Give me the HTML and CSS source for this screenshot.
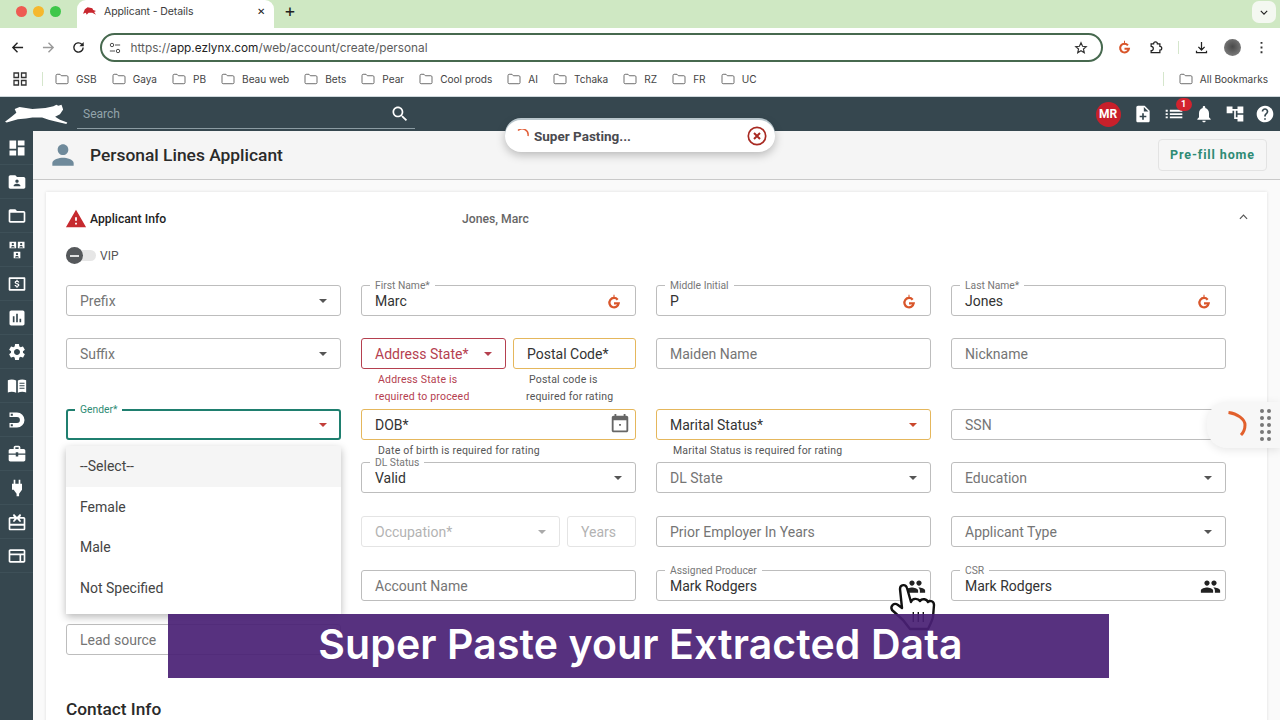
FILE: index.html
```html
<!DOCTYPE html>
<html lang="en">
<head>
  <meta charset="UTF-8" />
  <meta name="viewport" content="width=device-width, initial-scale=1.0"/>
  <title>Applicant - Details</title>
  <link rel="stylesheet" href="styles.css">
</head>
<body>

<svg class="sprite" xmlns="http://www.w3.org/2000/svg">
  <symbol id="i-dashboard" viewBox="0 0 24 24"><path d="M3 13h8V3H3v10zm0 8h8v-6H3v6zm10 0h8V11h-8v10zm0-18v6h8V3h-8z"/></symbol>
  <symbol id="i-folder-shared" viewBox="0 0 24 24"><path d="M20 6h-8l-2-2H4c-1.1 0-1.99.9-1.99 2L2 18c0 1.1.9 2 2 2h16c1.1 0 2-.9 2-2V8c0-1.1-.9-2-2-2zm-8 3c1.1 0 2 .9 2 2s-.9 2-2 2-2-.9-2-2 .9-2 2-2zm4 8H8v-1c0-1.33 2.67-2 4-2s4 .67 4 2v1z"/></symbol>
  <symbol id="i-folder" viewBox="0 0 24 24"><path d="M20 6h-8l-2-2H4c-1.1 0-1.99.9-1.99 2L2 18c0 1.1.9 2 2 2h16c1.1 0 2-.9 2-2V8c0-1.1-.9-2-2-2zm0 12H4V8h16v10z"/></symbol>
  <symbol id="i-people" viewBox="0 0 24 24"><path d="M3 2h8v8H3zM13 2h8v8h-8zM8 14h8v8H8z"/><path fill="#36474f" d="M7 3.5a1.4 1.4 0 1 1 0 2.8 1.4 1.4 0 0 1 0-2.8zM4.6 9c0-1.2 1.6-1.8 2.4-1.8s2.4.6 2.4 1.8zM17 3.5a1.4 1.4 0 1 1 0 2.8 1.4 1.4 0 0 1 0-2.8zM14.6 9c0-1.2 1.6-1.8 2.4-1.8s2.4.6 2.4 1.8zM12 15.5a1.4 1.4 0 1 1 0 2.8 1.4 1.4 0 0 1 0-2.8zM9.6 21c0-1.2 1.6-1.8 2.4-1.8s2.4.6 2.4 1.8z"/></symbol>
  <symbol id="i-dollar" viewBox="0 0 24 24"><path fill-rule="evenodd" d="M3 4h18c.6 0 1 .4 1 1v14c0 .6-.4 1-1 1H3c-.6 0-1-.4-1-1V5c0-.6.4-1 1-1zm1 2v12h16V6z"/><path d="M11.3 7h1.4v1.1c1.1.2 1.9.9 2 2h-1.5c-.1-.5-.5-.8-1.2-.8s-1.2.3-1.2.8.4.7 1.6 1c1.5.4 2.5.9 2.5 2.2 0 1.1-.8 1.8-2.2 2v1.2h-1.4v-1.2c-1.2-.2-2.1-1-2.2-2.1h1.5c.1.6.6 1 1.4 1 .9 0 1.3-.4 1.3-.9s-.3-.8-1.6-1.1c-1.5-.4-2.5-1-2.5-2.2 0-1 .8-1.7 2.1-1.9z"/></symbol>
  <symbol id="i-chart" viewBox="0 0 24 24"><path d="M19 3H5c-1.1 0-2 .9-2 2v14c0 1.1.9 2 2 2h14c1.1 0 2-.9 2-2V5c0-1.1-.9-2-2-2zM9 17H7v-7h2v7zm4 0h-2V7h2v10zm4 0h-2v-4h2v4z"/></symbol>
  <symbol id="i-settings" viewBox="0 0 24 24"><path d="M19.14 12.94c.04-.3.06-.61.06-.94 0-.32-.02-.64-.07-.94l2.03-1.58c.18-.14.23-.41.12-.61l-1.92-3.32c-.12-.22-.37-.29-.59-.22l-2.39.96c-.5-.38-1.03-.7-1.62-.94l-.36-2.54c-.04-.24-.24-.41-.48-.41h-3.84c-.24 0-.43.17-.47.41l-.36 2.54c-.59.24-1.13.57-1.62.94l-2.39-.96c-.22-.08-.47 0-.59.22L2.74 8.87c-.12.21-.08.47.12.61l2.03 1.58c-.05.3-.09.63-.09.94s.02.64.07.94l-2.03 1.58c-.18.14-.23.41-.12.61l1.92 3.32c.12.22.37.29.59.22l2.39-.96c.5.38 1.03.7 1.62.94l.36 2.54c.05.24.24.41.48.41h3.84c.24 0 .44-.17.47-.41l.36-2.54c.59-.24 1.13-.56 1.62-.94l2.39.96c.22.08.47 0 .59-.22l1.92-3.32c.12-.22.07-.47-.12-.61l-2.01-1.58zM12 15.6c-1.98 0-3.6-1.62-3.6-3.6s1.62-3.6 3.6-3.6 3.6 1.62 3.6 3.6-1.62 3.6-3.6 3.6z"/></symbol>
  <symbol id="i-book" viewBox="0 0 24 24"><path fill-rule="evenodd" d="M1 5c3-1.3 7-1.3 10 .3V20c-3-1.5-7-1.5-10-.3zM13 5.3c3-1.6 7-1.6 10-.3v14.7c-3-1.2-7-1.2-10 .3zM15 8v1.3h6V8zm0 3v1.3h6V11zm0 3v1.3h6V14z"/></symbol>
  <symbol id="i-magnet" viewBox="0 0 24 24"><path fill-rule="evenodd" d="M3 3h9a9 9 0 0 1 0 18H3v-5.5h9a3.5 3.5 0 0 0 0-7H3zm1.5 1.5V7H7V4.5zm0 12.500V19.500H7V17z"/></symbol>
  <symbol id="i-work" viewBox="0 0 24 24"><path d="M20 6h-4V4c0-1.11-.89-2-2-2h-4c-1.11 0-2 .89-2 2v2H4c-1.11 0-1.99.89-1.99 2L2 11.5h8.5V10h3v1.5H22V8c0-1.11-.89-2-2-2zm-6 0h-4V4h4v2zM13.5 15h-3v-2H2l.01 6c0 1.11.88 2 1.99 2h16c1.11 0 2-.89 2-2v-6h-8.5z"/></symbol>
  <symbol id="i-plug" viewBox="0 0 24 24"><path d="M8 2h2v5h4V2h2v5h2v7l-3.5 5v3h-3v-3L8 14 6 14V7h2z"/></symbol>
  <symbol id="i-gift" viewBox="0 0 24 24"><path fill-rule="evenodd" d="M4 6h4.2L7 3.5l1.5-1L12 6l3.5-3.500 1.500 1L15.800 6H20c1.100 0 2 .9 2 2v12c0 1.100-.9 2-2 2H4c-1.100 0-2-.9-2-2V8c0-1.100.9-2 2-2zm0 2v6h16V8h-5l2 3-1.500 1L12 8.500 8.500 12 7 11l2-3zm0 8.500V20h16v-3.500z"/></symbol>
  <symbol id="i-panel" viewBox="0 0 24 24"><path fill-rule="evenodd" d="M4 4h16c1.1 0 2 .9 2 2v12c0 1.1-.9 2-2 2H4c-1.1 0-2-.9-2-2V6c0-1.1.9-2 2-2zm0 2v3h16V6zm0 5v7h11v-7zm13 0v7h3v-7z"/></symbol>
  <symbol id="i-search" viewBox="0 0 24 24"><path d="M15.5 14h-.79l-.28-.27C15.41 12.59 16 11.11 16 9.5 16 5.91 13.09 3 9.5 3S3 5.91 3 9.5 5.91 16 9.5 16c1.61 0 3.09-.59 4.23-1.57l.27.28v.79l5 4.99L20.49 19l-4.99-5zm-6 0C7.01 14 5 11.99 5 9.5S7.01 5 9.5 5 14 7.01 14 9.5 11.99 14 9.5 14z"/></symbol>
  <symbol id="i-note" viewBox="0 0 24 24"><path d="M14 2H6c-1.1 0-1.99.9-1.99 2L4 20c0 1.1.89 2 1.99 2H18c1.1 0 2-.9 2-2V8l-6-6zm2 14h-3v3h-2v-3H8v-2h3v-3h2v3h3v2zm-3-7V3.5L18.5 9H13z"/></symbol>
  <symbol id="i-list" viewBox="0 0 24 24"><path d="M7 7h15v2.2H7zM7 11h15v2.2H7zM7 15h15v2.2H7zM2 7h2.5v2.2H2zM2 11h2.5v2.2H2zM2 15h2.5v2.2H2z"/></symbol>
  <symbol id="i-bell" viewBox="0 0 24 24"><path d="M12 22c1.1 0 2-.9 2-2h-4c0 1.1.89 2 2 2zm6-6v-5c0-3.07-1.64-5.64-4.5-6.32V4c0-.83-.67-1.5-1.5-1.5s-1.5.67-1.5 1.5v.68C7.63 5.36 6 7.92 6 11v5l-2 2v1h16v-1l-2-2z"/></symbol>
  <symbol id="i-tree" viewBox="0 0 24 24"><path d="M22 11V3h-7v3H9V3H2v8h7V8h2v10h4v3h7v-8h-7v3h-2V8h2v3z"/></symbol>
  <symbol id="i-help" viewBox="0 0 24 24"><path d="M12 2C6.48 2 2 6.48 2 12s4.48 10 10 10 10-4.48 10-10S17.52 2 12 2zm1 17h-2v-2h2v2zm2.07-7.75l-.9.92C13.45 12.9 13 13.5 13 15h-2v-.5c0-1.1.45-2.1 1.17-2.83l1.24-1.26c.37-.36.59-.86.59-1.41 0-1.1-.9-2-2-2s-2 .9-2 2H8c0-2.21 1.79-4 4-4s4 1.79 4 4c0 .88-.36 1.68-.93 2.25z"/></symbol>
  <symbol id="i-person" viewBox="0 0 24 24"><path d="M12 12c2.21 0 4-1.79 4-4s-1.79-4-4-4-4 1.79-4 4 1.79 4 4 4zm0 2c-2.67 0-8 1.34-8 4v2h16v-2c0-2.66-5.33-4-8-4z"/></symbol>
  <symbol id="i-warning" viewBox="0 0 24 24"><path d="M1 21h22L12 2 1 21zm12-3h-2v-2h2v2zm0-4h-2v-4h2v4z"/></symbol>
  <symbol id="i-event" viewBox="0 0 24 24"><path d="M13 12h-2v2h2v-2zM16 1v2H8V1H6v2H5c-1.11 0-1.99.9-1.99 2L3 19c0 1.1.89 2 2 2h14c1.1 0 2-.9 2-2V5c0-1.1-.9-2-2-2h-1V1h-2zm3 18H5V8h14v11z"/></symbol>
  <symbol id="i-group" viewBox="0 0 24 24"><path d="M16 11c1.66 0 2.99-1.34 2.99-3S17.66 5 16 5c-1.66 0-3 1.34-3 3s1.34 3 3 3zm-8 0c1.66 0 2.99-1.34 2.99-3S9.66 5 8 5C6.34 5 5 6.34 5 8s1.34 3 3 3zm0 2c-2.33 0-7 1.17-7 3.5V19h14v-2.5c0-2.33-4.67-3.5-7-3.5zm8 0c-.29 0-.62.02-.97.05 1.16.84 1.97 1.97 1.97 3.45V19h6v-2.5c0-2.33-4.67-3.5-7-3.5z"/></symbol>
  <symbol id="i-g" viewBox="0 0 24 24"><path fill="none" stroke="#d9562b" stroke-width="3.4" d="M17.5 8.5A7 7 0 1 0 19 14h-7"/><path fill="#d9562b" d="M11.2 1h1.6v6h-1.6z"/></symbol>
  <symbol id="i-bm" viewBox="0 0 16 14"><path fill="none" stroke="#666" stroke-width="1.1" d="M1 3c0-.8.5-1.5 1.3-1.5h3.4l1.5 1.7h6.5c.8 0 1.3.6 1.3 1.3v6.800c0 .8-.5 1.200-1.300 1.200H2.300c-.8 0-1.300-.5-1.300-1.200z"/></symbol>
</svg>

<div class="tabstrip">
  <div class="lights"><i class="light red"></i><i class="light amber"></i><i class="light green"></i></div>
  <div class="tab">
    <svg class="favicon" viewBox="0 0 14 10"><path fill="#c8272f" d="M0 8 2 3l3-2 5 1 1 2 3 1-2 1 2 3-4-2-4 0-2 2-1-2z"/></svg>
    <span class="tab-title">Applicant - Details</span>
    <span class="tab-close">✕</span>
  </div>
  <span class="tab-new">+</span>
  <span class="tab-more"><svg viewBox="0 0 10 6"><path fill="none" stroke="#222" stroke-width="1.4" d="M1 1l4 4 4-4"/></svg></span>
</div>

<div class="toolbar">
  <svg class="nav-icon" viewBox="0 0 14 14"><path fill="none" stroke="#222" stroke-width="1.5" d="M13 7H2M7 2 2 7l5 5"/></svg>
  <svg class="nav-icon" viewBox="0 0 14 14"><path fill="none" stroke="#9a9a9a" stroke-width="1.5" d="M1 7h11M7 2l5 5-5 5"/></svg>
  <svg class="nav-icon" viewBox="0 0 14 14"><path fill="none" stroke="#222" stroke-width="1.5" d="M12 7a5 5 0 1 1-1.5-3.6L12 5"/><path fill="#222" d="M12.6 1v4.7H8z"/></svg>
  <div class="urlbar">
    <svg class="url-tune" viewBox="0 0 14 14"><circle cx="3.5" cy="3.5" r="2" fill="none" stroke="#444" stroke-width="1.1"/><path stroke="#444" stroke-width="1.1" d="M7 3.5h6M1 10.5h6"/><circle cx="10.5" cy="10.5" r="2" fill="none" stroke="#444" stroke-width="1.1"/></svg>
    <span class="url-text">https://<b>app.ezlynx.com</b>/web/account/create/personal</span>
    <svg class="url-star" viewBox="0 0 24 24"><path fill="none" stroke="#333" stroke-width="2" d="m12 3 2.7 6 6.3.6-4.8 4.2 1.5 6.4L12 16.800l-5.700 3.400 1.500-6.400L3 9.600 9.300 9z"/></svg>
  </div>
  <div class="toolbar-tools">
    <svg class="tool"><use href="#i-g"/></svg>
    <svg class="tool" viewBox="0 0 24 24"><path fill="none" stroke="#222" stroke-width="2" d="M5 6h4a3 3 0 0 1 6 0h4v4a3 3 0 0 1 0 6v4H5v-3a3 3 0 0 0 0-7z"/></svg>
    <i class="tool-sep"></i>
    <svg class="tool" viewBox="0 0 24 24"><path fill="none" stroke="#222" stroke-width="2" d="M12 3v12M7 11l5 5 5-5M4 17v3h16v-3"/></svg>
    <i class="tool-avatar"></i>
    <svg class="tool" viewBox="0 0 24 24"><path fill="#333" d="M10.5 3h3v3h-3zM10.5 10.5h3v3h-3zM10.5 18h3v3h-3z"/></svg>
  </div>
</div>

<div class="bookmarks">
  <svg class="bm-apps" viewBox="0 0 14 14"><path fill="none" stroke="#333" stroke-width="1.3" d="M1 1h4.5v4.5H1zM8.5 1H13v4.5H8.5zM1 8.5h4.5V13H1zM8.5 8.5H13V13H8.5z"/></svg>
  <i class="bm-sep"></i>
  <span class="bm"><svg class="bm-icon"><use href="#i-bm"/></svg>GSB</span>
  <span class="bm"><svg class="bm-icon"><use href="#i-bm"/></svg>Gaya</span>
  <span class="bm"><svg class="bm-icon"><use href="#i-bm"/></svg>PB</span>
  <span class="bm"><svg class="bm-icon"><use href="#i-bm"/></svg>Beau web</span>
  <span class="bm"><svg class="bm-icon"><use href="#i-bm"/></svg>Bets</span>
  <span class="bm"><svg class="bm-icon"><use href="#i-bm"/></svg>Pear</span>
  <span class="bm"><svg class="bm-icon"><use href="#i-bm"/></svg>Cool prods</span>
  <span class="bm"><svg class="bm-icon"><use href="#i-bm"/></svg>AI</span>
  <span class="bm"><svg class="bm-icon"><use href="#i-bm"/></svg>Tchaka</span>
  <span class="bm"><svg class="bm-icon"><use href="#i-bm"/></svg>RZ</span>
  <span class="bm"><svg class="bm-icon"><use href="#i-bm"/></svg>FR</span>
  <span class="bm"><svg class="bm-icon"><use href="#i-bm"/></svg>UC</span>
  <i class="bm-sep bm-sep-end"></i>
  <span class="bm"><svg class="bm-icon"><use href="#i-bm"/></svg>All Bookmarks</span>
</div>

<header class="appbar">
  <svg class="logo" viewBox="0 0 65 21"><path fill="#fff" d="M0 18 6.7 12.700 11.700 8.700 10 4.700 15 2.700 28.300 4.700 41.700 3.700 50 2 53 .5 55 1.500 58.300 .5 60 5.300 56.700 10.300 51.700 12.700 56.700 16 64.300 18.700 63.300 20.300 53.300 18 45 16 38.300 13.500 28.300 13.500 21.700 14.500 13.300 15.500 1.700 18.700z"/></svg>
  <div class="search">
    <span>Search</span>
    <svg class="search-icon"><use href="#i-search"/></svg>
  </div>
  <div class="appbar-tools">
    <span class="avatar">MR</span>
    <svg class="bar-icon"><use href="#i-note"/></svg>
    <span class="bar-list">
      <svg class="bar-icon"><use href="#i-list"/></svg>
      <span class="badge">1</span>
    </span>
    <svg class="bar-icon"><use href="#i-bell"/></svg>
    <svg class="bar-icon"><use href="#i-tree"/></svg>
    <svg class="bar-icon"><use href="#i-help"/></svg>
  </div>
</header>

<div class="app">
  <nav class="sidebar">
    <span class="nav-item"><svg><use href="#i-dashboard"/></svg></span>
    <span class="nav-item"><svg><use href="#i-folder-shared"/></svg></span>
    <span class="nav-item"><svg><use href="#i-folder"/></svg></span>
    <span class="nav-item"><svg><use href="#i-people"/></svg></span>
    <span class="nav-item"><svg><use href="#i-dollar"/></svg></span>
    <span class="nav-item"><svg><use href="#i-chart"/></svg></span>
    <span class="nav-item"><svg><use href="#i-settings"/></svg></span>
    <span class="nav-item"><svg><use href="#i-book"/></svg></span>
    <span class="nav-item"><svg><use href="#i-magnet"/></svg></span>
    <span class="nav-item"><svg><use href="#i-work"/></svg></span>
    <span class="nav-item"><svg><use href="#i-plug"/></svg></span>
    <span class="nav-item"><svg><use href="#i-gift"/></svg></span>
    <span class="nav-item"><svg><use href="#i-panel"/></svg></span>
  </nav>

  <main class="main">
    <div class="page-head">
      <svg class="head-icon"><use href="#i-person"/></svg>
      <h1>Personal Lines Applicant</h1>
      <button class="prefill">Pre-fill home</button>
    </div>

    <section class="card">
      <div class="card-head">
        <svg class="warn-icon"><use href="#i-warning"/></svg>
        <strong>Applicant Info</strong>
        <span class="card-name">Jones, Marc</span>
        <svg class="card-chevron" viewBox="0 0 10 6"><path fill="none" stroke="#555" stroke-width="1.3" d="M1 5l4-4 4 4"/></svg>
      </div>

      <div class="vip">
        <span class="switch"><i class="knob"></i></span>
        <span>VIP</span>
      </div>

      <div class="form-grid">
        <div class="cell"><div class="field select"><span class="ph">Prefix</span></div></div>
        <div class="cell"><div class="field"><label>First Name*</label><span class="val">Marc</span><svg class="fg"><use href="#i-g"/></svg></div></div>
        <div class="cell"><div class="field"><label>Middle Initial</label><span class="val">P</span><svg class="fg"><use href="#i-g"/></svg></div></div>
        <div class="cell"><div class="field"><label>Last Name*</label><span class="val">Jones</span><svg class="fg"><use href="#i-g"/></svg></div></div>

        <div class="cell"><div class="field select"><span class="ph">Suffix</span></div></div>
        <div class="cell split">
          <div class="part part-state">
            <div class="field select invalid"><span class="ph">Address State*</span></div>
            <p class="hint hint-red">Address State is<br>required to proceed</p>
          </div>
          <div class="part part-postal">
            <div class="field warn"><span class="val">Postal Code*</span></div>
            <p class="hint">Postal code is<br>required for rating</p>
          </div>
        </div>
        <div class="cell"><div class="field"><span class="ph">Maiden Name</span></div></div>
        <div class="cell"><div class="field"><span class="ph">Nickname</span></div></div>

        <div class="cell"><div class="field select focus"><label>Gender*</label></div></div>
        <div class="cell">
          <div class="field warn"><span class="val">DOB*</span><svg class="cal"><use href="#i-event"/></svg></div>
          <p class="hint">Date of birth is required for rating</p>
        </div>
        <div class="cell">
          <div class="field select warn warn-arrow"><span class="val">Marital Status*</span></div>
          <p class="hint">Marital Status is required for rating</p>
        </div>
        <div class="cell"><div class="field"><span class="ph">SSN</span></div></div>

        <div class="cell"></div>
        <div class="cell"><div class="field select"><label>DL Status</label><span class="val">Valid</span></div></div>
        <div class="cell"><div class="field select"><span class="ph">DL State</span></div></div>
        <div class="cell"><div class="field select"><span class="ph">Education</span></div></div>

        <div class="cell"></div>
        <div class="cell split">
          <div class="part part-occ"><div class="field select off"><span class="ph">Occupation*</span></div></div>
          <div class="part part-years"><div class="field off"><span class="ph">Years</span></div></div>
        </div>
        <div class="cell"><div class="field"><span class="ph">Prior Employer In Years</span></div></div>
        <div class="cell"><div class="field select"><span class="ph">Applicant Type</span></div></div>

        <div class="cell"></div>
        <div class="cell"><div class="field"><span class="ph">Account Name</span></div></div>
        <div class="cell"><div class="field"><label>Assigned Producer</label><span class="val">Mark Rodgers</span><svg class="fgroup"><use href="#i-group"/></svg></div></div>
        <div class="cell"><div class="field"><label>CSR</label><span class="val">Mark Rodgers</span><svg class="fgroup"><use href="#i-group"/></svg></div></div>

        <div class="cell"><div class="field"><span class="ph">Lead source</span></div></div>
      </div>

      <h2>Contact Info</h2>
    </section>
  </main>
</div>

<ul class="dropdown">
  <li class="active">--Select--</li>
  <li>Female</li>
  <li>Male</li>
  <li>Not Specified</li>
</ul>

<div class="paste-pill">
  <svg class="pill-spin" viewBox="0 0 14 14"><path fill="none" stroke="#e2603a" stroke-width="1.5" d="M2 1.5A6 6 0 0 1 12 7"/></svg>
  <span>Super Pasting...</span>
  <svg class="pill-close" viewBox="0 0 20 20"><circle cx="10" cy="10" r="8.7" fill="none" stroke="#a82a22" stroke-width="1.7"/><path stroke="#a82a22" stroke-width="2" d="m7 7 6 6m0-6-6 6"/></svg>
</div>

<div class="float-widget">
  <svg class="float-spin" viewBox="0 0 20 26"><path fill="none" stroke="#e2602c" stroke-width="3" d="M1.5 1.5C10 2.5 18 8 18 14c0 4-2 8-4 10"/></svg>
  <span class="dots"><i></i><i></i><i></i><i></i><i></i><i></i><i></i><i></i><i></i><i></i></span>
</div>

<svg class="hand" viewBox="0 0 48 54"><path fill="#fff" stroke="#111" stroke-width="2.4" stroke-linejoin="round" d="M12 9c0-5 6-5 7-1l4 14c1-4 7-4 9-1 2-3 7-2 8 1 2-2 6-1 6 3l-1 12c-1 4-3 8-5 12H22l-7-9L4 30c-2-4 2-8 6-5l4 3z"/><path stroke="#111" stroke-width="1.4" d="M25.3 32v10M30.3 32v10M35.3 32v10"/></svg>

<div class="banner">Super Paste your Extracted Data</div>

</body>
</html>
```

FILE: styles.css
```css
* {
  box-sizing: border-box;
}
html, body {
  margin: 0;
  height: 720px;
  overflow: hidden;
}
body {
  position: relative;
  width: 1280px;
  background: #fff;
  font-family: Roboto, "Liberation Sans", sans-serif;
  color: #333;
}
.sprite {
  display: none;
}

/* browser chrome */
.tabstrip {
  height: 28px;
  background: #cfe8c3;
  display: flex;
  align-items: flex-start;
  font-family: Inter, "Liberation Sans", sans-serif;
}
.lights {
  display: flex;
  gap: 6px;
  padding: 6px 0 0 16px;
  width: 77px;
}
.light {
  width: 11px;
  height: 11px;
  border-radius: 50%;
}
.red { background: #ee5b52; }
.amber { background: #f5b82e; }
.green { background: #3ec74a; }
.tab {
  width: 197px;
  height: 28px;
  background: #fff;
  border-radius: 9px 9px 0 0;
  display: flex;
  align-items: center;
  padding: 0 9px 6px 6px;
}
.favicon {
  width: 13px;
  height: 10px;
  margin-right: 8px;
}
.tab-title {
  flex: 1;
  font-size: 10.5px;
  letter-spacing: -.1px;
  color: #3c3c3c;
}
.tab-close {
  font-size: 10px;
  color: #222;
}
.tab-new {
  margin: 2px 0 0 10px;
  font-size: 18px;
  line-height: 18px;
  color: #222;
}
.tab-more {
  margin: 1px 4px 0 auto;
  width: 24px;
  height: 22px;
  background: #f4f8f1;
  border-radius: 7px;
  display: flex;
  align-items: center;
  justify-content: center;
}
.tab-more svg {
  width: 8px;
  height: 5px;
}

.toolbar {
  height: 37px;
  display: flex;
  align-items: center;
  padding: 2px 0 0 11px;
  font-family: Inter, "Liberation Sans", sans-serif;
}
.nav-icon {
  width: 13px;
  height: 13px;
  margin-right: 17.5px;
  flex-shrink: 0;
}
.urlbar {
  flex-shrink: 0;
  width: 1003px;
  height: 29px;
  margin-left: -3px;
  border: 2px solid #47694f;
  border-radius: 15px;
  display: flex;
  align-items: center;
  padding: 0 13px 0 7px;
}
.url-tune {
  width: 12px;
  height: 12px;
  margin-right: 10px;
}
.url-text {
  flex: 1;
  font-size: 11.8px;
  color: #5c5c5c;
}
.url-text b {
  font-weight: 400;
  color: #222;
}
.url-star {
  width: 14px;
  height: 14px;
}
.toolbar-tools {
  display: flex;
  align-items: center;
  margin-left: 14.5px;
}
.tool {
  width: 15px;
  height: 15px;
  margin-right: 16px;
  flex-shrink: 0;
}
.tool-sep {
  width: 1px;
  height: 13px;
  background: #d5e6cc;
  margin: 0 15px 0 -1.5px;
}
.tool-avatar {
  width: 17px;
  height: 17px;
  border-radius: 50%;
  background: radial-gradient(circle at 50% 45%, #4a4a4a 0, #5f5f5f 35%, #8c8c8c 100%);
  margin: 0 13px 0 -1px;
}

.bookmarks {
  height: 32px;
  display: flex;
  align-items: center;
  gap: 15px;
  padding-left: 13px;
  padding-bottom: 4px;
  font-family: Inter, "Liberation Sans", sans-serif;
  font-size: 10.1px;
  color: #444;
  border-bottom: 1px solid #cfd8dc;
}
.bm-apps {
  width: 14px;
  height: 14px;
}
.bm-sep {
  width: 1px;
  height: 14px;
  background: #d5e6cc;
  margin-right: -3px;
}
.bm-sep-end {
  margin-left: auto;
  margin-right: 0;
}
.bm {
  display: flex;
  align-items: center;
  gap: 7px;
  white-space: nowrap;
}
.bm:last-child {
  padding-right: 12px;
}
.bm-icon {
  width: 14px;
  height: 12px;
}

/* app bar */
.appbar {
  height: 34px;
  background: #36474f;
  display: flex;
  align-items: center;
  position: relative;
}
.logo {
  width: 63px;
  height: 21px;
  margin-left: 5px;
  flex-shrink: 0;
}
.search {
  width: 338px;
  height: 30px;
  margin-left: 9px;
  border-bottom: 1px solid #8b9ba2;
  display: flex;
  align-items: center;
  justify-content: space-between;
  padding: 0 5px 0 6px;
  font-size: 12px;
  color: #93a4ab;
}
.search-icon {
  width: 20px;
  height: 20px;
  fill: #fff;
}
.appbar-tools {
  margin-left: auto;
  padding-right: 5px;
  display: flex;
  align-items: center;
  gap: 10.5px;
}
.avatar {
  width: 25px;
  height: 25px;
  border-radius: 50%;
  background: #c8202b;
  color: #fff;
  font-size: 12px;
  font-weight: 700;
  display: flex;
  align-items: center;
  justify-content: center;
  margin-right: 2px;
}
.bar-icon {
  width: 20px;
  height: 20px;
  fill: #fff;
  display: block;
}
.bar-list {
  position: relative;
}
.badge {
  position: absolute;
  top: -6px;
  right: -8px;
  width: 16px;
  height: 13px;
  background: #d3232e;
  border-radius: 8px;
  color: #fff;
  font-size: 9px;
  font-weight: 700;
  text-align: center;
  line-height: 13px;
}

/* app layout */
.app {
  display: flex;
  height: 589px;
}
.sidebar {
  width: 33px;
  background: #36474f;
  display: flex;
  flex-direction: column;
  flex-shrink: 0;
}
.nav-item {
  height: 34px;
  display: flex;
  align-items: center;
  justify-content: center;
  border-bottom: 1px solid #3e5058;
}
.nav-item svg {
  width: 20px;
  height: 20px;
  fill: #fff;
}
.main {
  flex: 1;
  background: #fafafa;
  overflow: hidden;
}
.page-head {
  height: 49px;
  background: #f5f5f5;
  border-bottom: 1px solid #c9c9c9;
  display: flex;
  align-items: center;
  padding: 0 13px 1px 14px;
}
.head-icon {
  width: 32px;
  height: 32px;
  fill: #6f8a9b;
}
.page-head h1 {
  margin: 0 0 0 11px;
  font-size: 17.4px;
  font-weight: 500;
  color: #2a2a2a;
}
.prefill {
  margin-left: auto;
  width: 109px;
  height: 32px;
  background: #f6f6f6;
  border: 1px solid #e3e3e3;
  border-radius: 4px;
  color: #2e8b74;
  font-family: Roboto, "Liberation Sans", sans-serif;
  font-size: 12.5px;
  font-weight: 700;
  letter-spacing: .9px;
}
.card {
  margin: 12px 13px 0 13px;
  padding: 0 40px 0 20px;
  background: #fff;
  box-shadow: 0 0 3px rgba(0,0,0,0.12);
  height: 560px;
}
.card-head {
  height: 54px;
  display: flex;
  align-items: center;
  font-size: 12.2px;
}
.warn-icon {
  width: 22px;
  height: 22px;
  fill: #c62a2f;
  margin-right: 3px;
  margin-left: -1px;
}
.card-head strong {
  width: 372px;
  font-weight: 500;
  color: #222;
}
.card-name {
  color: #666;
  font-weight: 500;
}
.card-chevron {
  width: 9px;
  height: 6px;
  margin-left: auto;
  margin-right: -21px;
  margin-bottom: 5px;
}
.vip {
  height: 19px;
  display: flex;
  align-items: center;
  gap: 4px;
  font-size: 12px;
  color: #555;
}
.switch {
  width: 30px;
  height: 11px;
  background: #e6e6e6;
  border-radius: 6px;
  display: flex;
  align-items: center;
}
.knob {
  width: 17px;
  height: 17px;
  border-radius: 50%;
  background: #55585b;
  position: relative;
}
.knob::after {
  content: "";
  position: absolute;
  left: 4px;
  top: 7.5px;
  width: 9px;
  height: 2px;
  background: #e0e0e0;
}

/* form */
.form-grid {
  margin-top: 20px;
  display: grid;
  grid-template-columns: repeat(4, 275px);
  grid-template-rows: 53px 71px 53px 54px 54px 54px 54px;
  column-gap: 20px;
}
.split {
  display: flex;
  gap: 7px;
}
.part-state { width: 145px; }
.part-postal { width: 123px; }
.part-occ { width: 199px; }
.part-years { width: 69px; }
.field {
  position: relative;
  height: 31px;
  border: 1px solid #bdbdbd;
  border-radius: 3px;
  display: flex;
  align-items: center;
  padding: 0 13px;
  font-size: 14px;
  background: #fff;
}
.field label {
  position: absolute;
  left: 8px;
  top: -6px;
  padding: 0 5px;
  background: #fff;
  font-size: 10.3px;
  line-height: 12px;
  color: #777;
}
.ph {
  color: #757575;
  white-space: nowrap;
}
.val {
  color: #333;
  white-space: nowrap;
}
.select::after {
  content: "";
  position: absolute;
  right: 13px;
  top: 13px;
  border-left: 4.5px solid transparent;
  border-right: 4.5px solid transparent;
  border-top: 4.5px solid #555;
}
.invalid {
  border-color: #b5404f;
}
.invalid .ph {
  color: #b5404f;
}
.invalid::after {
  border-top-color: #b5404f;
}
.warn {
  border-color: #e5b75c;
  border-width: 1.5px;
}
.warn-arrow::after {
  border-top-color: #c9472c;
}
.focus {
  border: 2px solid #1f7f6f;
}
.focus label {
  color: #2e8b74;
  top: -7px;
  left: 7px;
}
.focus::after {
  border-top-color: #c23f3a;
  right: 12px;
  top: 12px;
}
.off {
  border-color: #e4e4e4;
}
.off .ph {
  color: #b3b3b3;
}
.off::after {
  border-top-color: #aaa;
}
.fg {
  position: absolute;
  right: 13px;
  top: 8px;
  width: 16px;
  height: 16px;
}
.cal {
  position: absolute;
  right: 4px;
  top: 3px;
  width: 22px;
  height: 22px;
  fill: #666;
}
.fgroup {
  position: absolute;
  right: 4px;
  top: 5px;
  width: 21px;
  height: 21px;
  fill: #222;
}
.hint {
  margin: 2px 0 0;
  padding-left: 13px;
  font-size: 10.5px;
  line-height: 17px;
  letter-spacing: .2px;
  color: #555;
  white-space: nowrap;
}
.part .hint {
  text-indent: 3px;
}
.cell > .hint {
  padding-left: 17px;
}
.part .hint-red {
  padding-left: 14px;
  color: #b5404f;
}
.card h2 {
  margin: 21px 0 0;
  font-size: 17.3px;
  font-weight: 500;
  color: #2a2a2a;
}

/* overlays */
.dropdown {
  position: absolute;
  left: 66px;
  top: 446px;
  width: 275px;
  height: 168px;
  margin: 0;
  padding: 0;
  list-style: none;
  background: #fff;
  box-shadow: 0 3px 8px rgba(0,0,0,0.28);
  font-size: 14px;
  color: #444;
}
.dropdown li {
  height: 40.5px;
  display: flex;
  align-items: center;
  padding-left: 14px;
}
.dropdown .active {
  background: #f5f5f5;
}
.paste-pill {
  position: absolute;
  left: 505px;
  top: 120px;
  width: 270px;
  height: 32px;
  background: #fff;
  border-radius: 16px;
  box-shadow: 0 -2px 0 0 #b9c6cc, 0 3px 10px rgba(0,0,0,0.25);
  display: flex;
  align-items: center;
  padding: 0 8px 0 11px;
  font-size: 13.5px;
  font-weight: 700;
  color: #4a4a4f;
}
.pill-spin {
  width: 14px;
  height: 14px;
  margin-right: 4px;
}
.pill-close {
  width: 20px;
  height: 20px;
  margin-left: auto;
}
.float-widget {
  position: absolute;
  left: 1207px;
  top: 402px;
  width: 73px;
  height: 46px;
  background: #f7f7f7;
  border-radius: 20px 0 0 20px;
  box-shadow: 0 2px 10px rgba(0,0,0,0.1);
  display: flex;
  align-items: center;
  padding-left: 20px;
}
.float-spin {
  width: 20px;
  height: 26px;
  margin-top: -3px;
}
.dots {
  display: grid;
  grid-template-columns: 3px 3px;
  gap: 2.8px 3.5px;
  margin-left: 13px;
}
.dots i {
  width: 4px;
  height: 4px;
  border-radius: 50%;
  background: #777;
}
.hand {
  position: absolute;
  left: 888px;
  top: 580px;
  width: 48px;
  height: 54px;
}
.banner {
  position: absolute;
  left: 168px;
  top: 614px;
  width: 941px;
  height: 64px;
  padding: 0 0 5px 4px;
  background: rgba(73,32,116,.92);
  color: #fff;
  font-family: Inter, "Liberation Sans", sans-serif;
  font-size: 41px;
  font-weight: 600;
  letter-spacing: .1px;
  display: flex;
  align-items: center;
  justify-content: center;
}
```
